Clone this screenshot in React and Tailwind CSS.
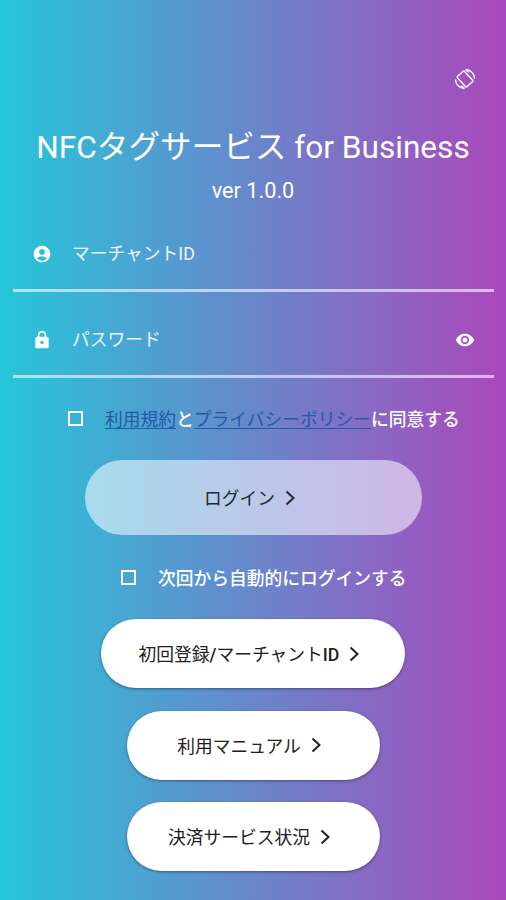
import { MdAccountCircle, MdLock, MdRemoveRedEye } from "react-icons/md";

function Chevron() {
  return (
    <svg width="12" height="16" viewBox="0 0 12 16" fill="none" stroke="currentColor" strokeWidth="2" className="shrink-0">
      <path d="M2.5 1.5 L9.5 8 L2.5 14.5" />
    </svg>
  );
}

function RotateIcon() {
  return (
    <svg width="22" height="22" viewBox="-11 -11 22 22" fill="none" stroke="currentColor" strokeWidth="1.4" className="shrink-0">
      <rect x="-4.8" y="-7" width="9.6" height="14" rx="1.2" transform="rotate(-43)" />
      <path d="M0.5 -9.6 A9.6 9.6 0 0 1 9.6 -0.5 M0.5 -9.6 L3.6 -6.8" />
      <path d="M-0.5 9.6 A9.6 9.6 0 0 1 -9.6 0.5 M-0.5 9.6 L-3.6 6.8" />
    </svg>
  );
}

function Checkbox() {
  return <span className="size-[15px] shrink-0 border-2 border-white" />;
}

function Field({ icon, label, trailing }) {
  return (
    <div className="mx-[13px] flex h-[86px] w-[481px] items-center border-b-[3px] border-white/60 pt-3 pr-[19px] pl-[19px]">
      <span className="flex w-10 shrink-0 text-white">{icon}</span>
      <span className="flex-1 text-[17.75px] leading-6 text-white/90">{label}</span>
      {trailing}
    </div>
  );
}

function PillButton({ width, children }) {
  return (
    <button className={`${width} flex h-[69px] items-center justify-center gap-[9px] rounded-full bg-white pr-[7px] text-[17.75px] text-[#202020] shadow-[0_1px_3px_rgba(0,0,0,0.4)]`}>
      <span className="pt-1">{children}</span>
      <Chevron />
    </button>
  );
}

export default function App() {
  return (
    <main className="flex h-[900px] w-[506px] flex-col overflow-hidden whitespace-nowrap bg-[linear-gradient(to_right,#26c6da,#ab47bc)] font-[Roboto,'Noto_Sans_CJK_JP',sans-serif] text-white">
      <header className="flex h-[90px] items-end justify-end pr-[30px]">
        <RotateIcon />
      </header>
      <h1 className="mt-[34px] text-center text-[31.6px] leading-[48px]">NFCタグサービス for Business</h1>
      <p className="mt-[3px] text-center text-[21.7px] leading-8">ver 1.0.0</p>
      <div className="-mt-px">
        <Field icon={<MdAccountCircle size={20} />} label="マーチャントID" />
        <Field icon={<MdLock size={20} />} label="パスワード" trailing={<MdRemoveRedEye size={20} />} />
      </div>

      <div className="mt-[28px] flex h-7 items-center pl-[68px] text-[17.75px] font-medium">
        <span className="mr-[22px] flex pb-1"><Checkbox /></span>
        <span className="pt-px">
          <a className="font-normal text-[#2259a8] underline decoration-1 underline-offset-2">利用規約</a>と
          <a className="font-normal text-[#2259a8] underline decoration-1 underline-offset-2">プライバシーポリシー</a>に同意する
        </span>
      </div>

      <button className="mt-[26px] ml-[85px] flex h-[75px] w-[337px] items-center justify-center gap-[9px] rounded-full bg-white/55 pr-[7px] text-[17.75px] text-[#202834]">
        <span className="pt-1">ログイン</span>
        <Chevron />
      </button>

      <div className="mt-[29px] flex h-7 items-center pl-[121px] text-[17.75px] font-medium">
        <span className="mr-[22px] flex pb-0.5"><Checkbox /></span>
        <span className="pt-[3px]">次回から自動的にログインする</span>
      </div>

      <div className="mt-[27px] flex flex-col items-center gap-[22.5px]">
        <PillButton width="w-[304px]">
          初回登録<span className="font-medium">/</span>マーチャント<span className="font-medium">ID</span>
        </PillButton>
        <PillButton width="w-[253px]">利用マニュアル</PillButton>
        <PillButton width="w-[253px]">決済サービス状況</PillButton>
      </div>
    </main>
  );
}
